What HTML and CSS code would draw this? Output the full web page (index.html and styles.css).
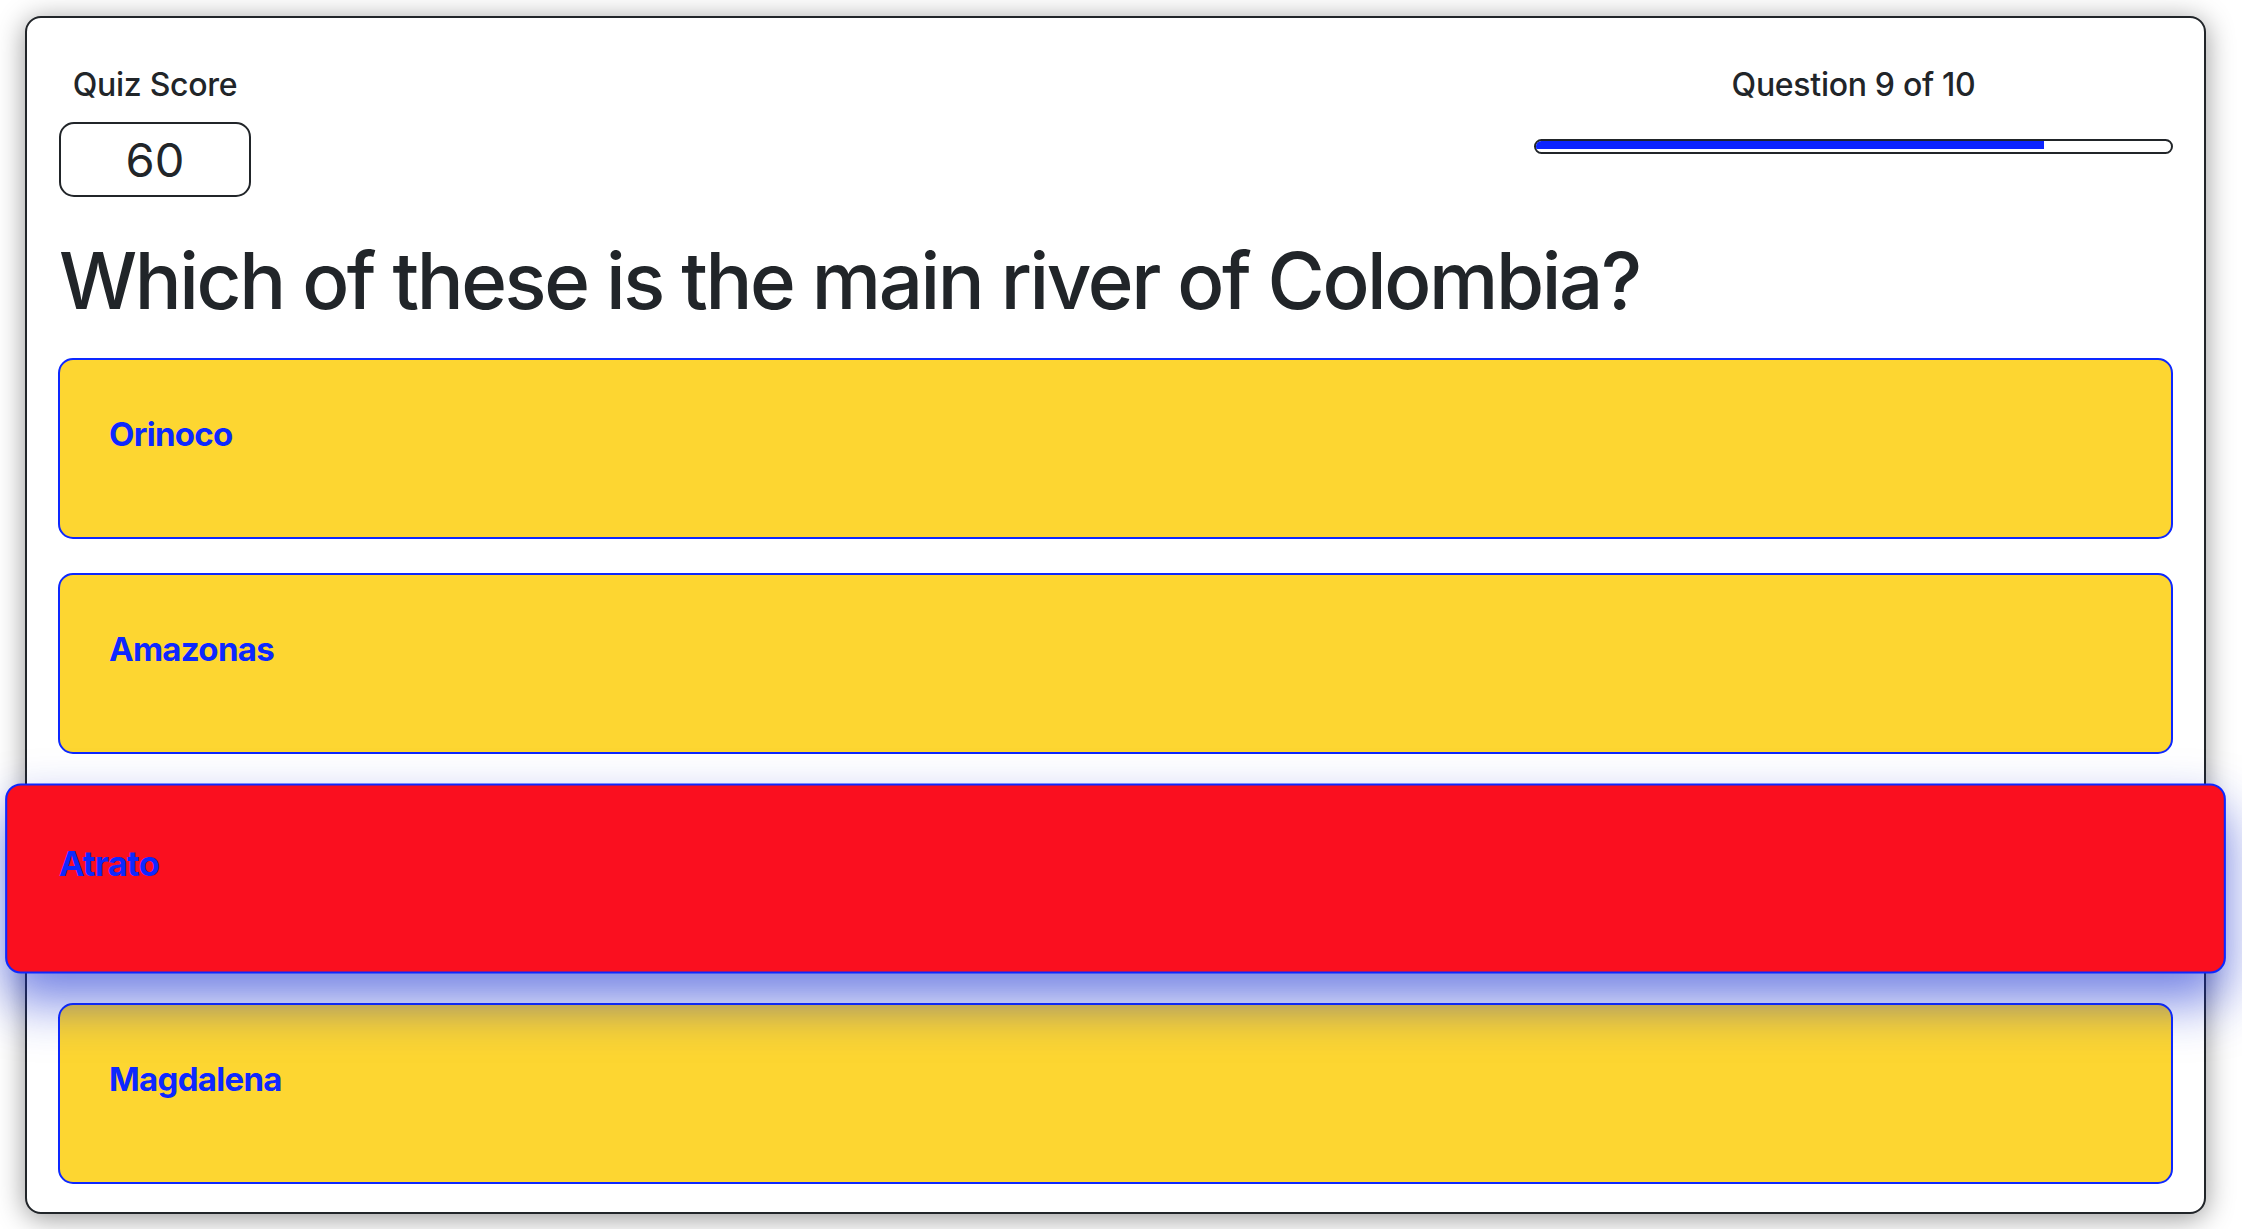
FILE: index.html
```html
<!DOCTYPE html>
<html lang="en">
<head>
<meta charset="utf-8">
<title>Quiz</title>
<link rel="stylesheet" href="styles.css">
</head>
<body>
<main class="card">
  <header class="top">
    <div class="score">
      <div class="label">Quiz Score</div>
      <div class="score-box">60</div>
    </div>
    <div class="progress-col">
      <div class="label">Question 9 of 10</div>
      <div class="bar"><div class="fill" style="width: 80%"></div></div>
    </div>
  </header>
  <h1 class="question">Which of these is the main river of Colombia?</h1>
  <div class="options">
    <button class="option">Orinoco</button>
    <button class="option">Amazonas</button>
    <button class="option option-wrong">Atrato</button>
    <button class="option">Magdalena</button>
  </div>
</main>
</body>
</html>
```
FILE: styles.css
```css
html, body {
  margin: 0;
  padding: 0;
  background: #ffffff;
}
body {
  font-family: Inter, "Noto Sans", sans-serif;
  color: #212529;
  padding: 16px 36px 15px 25px;
  height: 1229px;
  box-sizing: border-box;
  overflow: hidden;
}
.card {
  height: 1198px;
  box-sizing: border-box;
  border: 2px solid #212529;
  border-radius: 16px;
  background: #fff;
  box-shadow: 0 4px 28px rgba(0, 0, 0, 0.42);
  padding: 47px 31px 0 31px;
}
.top {
  display: flex;
  justify-content: space-between;
  align-items: flex-start;
}
.label {
  font-size: 32px;
  font-weight: 500;
  line-height: 39px;
  letter-spacing: -0.3px;
  text-align: center;
}
.score {
  width: 192px;
  margin-left: 1px;
}
.score-box {
  margin-top: 18px;
  height: 75px;
  box-sizing: border-box;
  border: 2px solid #212529;
  border-radius: 15px;
  font-size: 47px;
  font-weight: 400;
  line-height: 71px;
  text-align: center;
}
.progress-col {
  width: 639px;
}
.bar {
  margin-top: 35px;
  height: 15px;
  box-sizing: border-box;
  border: 2px solid #212529;
  border-radius: 8px;
  background: #fff;
  overflow: hidden;
}
.fill {
  height: 8px;
  background: #0c24ff;
}
.question {
  margin: 37px 0 0 1px;
  font-size: 78px;
  font-weight: 500;
  line-height: 94px;
  letter-spacing: -2.4px;
}
.options {
  display: flex;
  flex-direction: column;
  gap: 34px;
  margin-top: 30px;
}
.option {
  display: block;
  width: 100%;
  box-sizing: border-box;
  border: 2px solid #0d28ff;
  border-radius: 15px;
  background: #fdd631;
  color: #0d28ff;
  font-family: Inter, "Noto Sans", sans-serif;
  font-size: 33px;
  font-weight: 700;
  line-height: 40px;
  letter-spacing: -0.7px;
  text-align: left;
  padding: 54px 49px 83px 49px;
  margin: 0;
  cursor: pointer;
}
.option-wrong {
  position: relative;
  z-index: 2;
  background: #fa0f1f;
  transform: scale(1.05);
  box-shadow: 0 26px 50px rgba(20, 45, 210, 0.6);
}
```
